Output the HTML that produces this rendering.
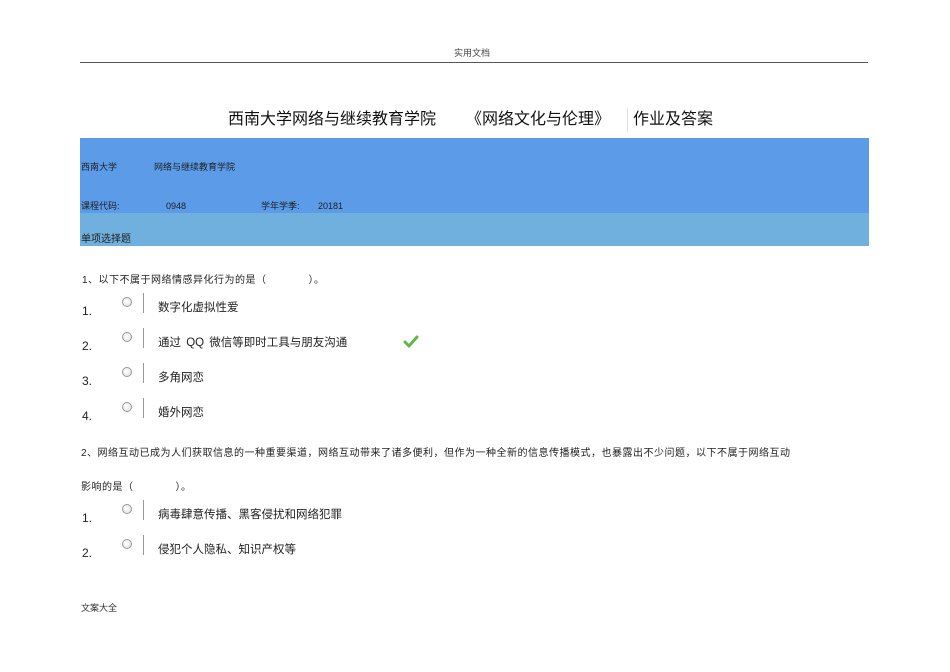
<!DOCTYPE html>
<html><head><meta charset="utf-8"><style>
body{margin:0;width:950px;height:672px;background:#fff;position:relative;overflow:hidden;font-family:"Liberation Sans","Noto Sans CJK SC",sans-serif;color:#222}
.a{position:absolute;white-space:nowrap;line-height:1}
.r{position:absolute;width:8px;height:8px;border:1px solid #999;border-radius:50%;background:radial-gradient(circle at 40% 40%,#fff,#ddd)}
.b{position:absolute;width:1px;height:20px;background:#999}
.o{font-size:11.5px}
</style></head><body>
<div class="a" style="left:454px;top:49px;font-size:9px;color:#444">实用文档</div>
<div style="position:absolute;left:80px;top:62px;width:788px;height:1px;background:#555"></div>
<div class="a" style="left:228px;top:112px;font-size:16px;color:#111">西南大学网络与继续教育学院</div>
<div class="a" style="left:466px;top:112px;font-size:16px;color:#111">《网络文化与伦理》</div>
<div style="position:absolute;left:627px;top:108px;width:1px;height:24px;background:#ddd"></div>
<div class="a" style="left:633px;top:112px;font-size:16px;color:#111">作业及答案</div>
<div style="position:absolute;left:80px;top:138px;width:789px;height:75px;background:#5b9be8"></div>
<div style="position:absolute;left:80px;top:213px;width:789px;height:33px;background:#6fb0de"></div>
<div class="a" style="left:81px;top:163px;font-size:9px">西南大学</div>
<div class="a" style="left:154px;top:163px;font-size:9px">网络与继续教育学院</div>
<div class="a" style="left:81px;top:202px;font-size:9px">课程代码:</div>
<div class="a" style="left:166px;top:202px;font-size:9px">0948</div>
<div class="a" style="left:261px;top:202px;font-size:9px">学年学季:</div>
<div class="a" style="left:318px;top:202px;font-size:9px">20181</div>
<div class="a" style="left:81px;top:235px;font-size:10px">单项选择题</div>
<div class="a" style="left:82px;top:276px;font-size:10px;letter-spacing:0.5px">1、以下不属于网络情感异化行为的是（　　　　）。</div>
<div class="a" style="left:82px;top:305px;font-size:12px">1.</div>
<div class="r" style="left:122px;top:297px"></div><div class="b" style="left:143px;top:293px"></div>
<div class="a o" style="left:158px;top:303px">数字化虚拟性爱</div>
<div class="a" style="left:82px;top:340px;font-size:12px">2.</div>
<div class="r" style="left:122px;top:332px"></div><div class="b" style="left:143px;top:328px"></div>
<div class="a o" style="left:158px;top:338px;word-spacing:2px">通过 QQ 微信等即时工具与朋友沟通</div>
<svg style="position:absolute;left:403px;top:335px" width="16" height="14"><path d="M2 7 L6 11 L14 2" stroke="#5fb84a" stroke-width="3" fill="none" stroke-linecap="round"/></svg>
<div class="a" style="left:82px;top:375px;font-size:12px">3.</div>
<div class="r" style="left:122px;top:367px"></div><div class="b" style="left:143px;top:363px"></div>
<div class="a o" style="left:158px;top:373px">多角网恋</div>
<div class="a" style="left:82px;top:410px;font-size:12px">4.</div>
<div class="r" style="left:122px;top:402px"></div><div class="b" style="left:143px;top:398px"></div>
<div class="a o" style="left:158px;top:408px">婚外网恋</div>
<div class="a" style="left:81px;top:449px;font-size:10px;letter-spacing:0.5px">2、网络互动已成为人们获取信息的一种重要渠道，网络互动带来了诸多便利，但作为一种全新的信息传播模式，也暴露出不少问题，以下不属于网络互动</div>
<div class="a" style="left:81px;top:483px;font-size:10px;letter-spacing:0.5px">影响的是（　　　　）。</div>
<div class="a" style="left:82px;top:512px;font-size:12px">1.</div>
<div class="r" style="left:122px;top:504px"></div><div class="b" style="left:143px;top:500px"></div>
<div class="a o" style="left:158px;top:510px">病毒肆意传播、黑客侵扰和网络犯罪</div>
<div class="a" style="left:82px;top:547px;font-size:12px">2.</div>
<div class="r" style="left:122px;top:539px"></div><div class="b" style="left:143px;top:535px"></div>
<div class="a o" style="left:158px;top:545px">侵犯个人隐私、知识产权等</div>
<div class="a" style="left:81px;top:604px;font-size:9px;color:#333">文案大全</div>
</body></html>
